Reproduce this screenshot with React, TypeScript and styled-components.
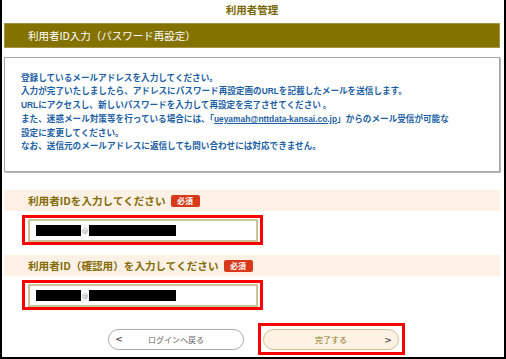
import React from "react";
import styled, { createGlobalStyle } from "styled-components";

const Global = createGlobalStyle`
  html, body { margin: 0; padding: 0; background: #fff; }
  body { font-family: "Noto Sans CJK JP", "Noto Sans", sans-serif; }
`;

const Frame = styled.div`
  box-sizing: border-box;
  width: 506px;
  height: 359px;
  border-left: 2px solid #000;
  border-right: 2px solid #000;
  border-bottom: 2px solid #000;
  padding: 0 4px 0 2px;
  display: flex;
  flex-direction: column;
  overflow: hidden;
`;

const Title = styled.div`
  height: 23px;
  line-height: 19px;
  text-align: center;
  font-size: 10.5px;
  font-weight: 700;
  color: #7a6800;
`;

const HeaderBar = styled.div`
  height: 25px;
  background: #847200;
  color: #fff;
  font-size: 10.5px;
  line-height: 25px;
  padding-left: 24px;
  box-shadow: inset 0 0 0 1px #a39544;
`;

const InfoBox = styled.div`
  box-sizing: border-box;
  margin-top: 9px;
  height: 115px;
  border: 1px solid #a5a5a5;
  box-shadow: 1px 1px 0 #b8b8b8;
  padding: 13px 0 0 16px;
  color: #1d5fa5;
  font-size: 8.6px;
  font-weight: 700;
  line-height: 13px;
  white-space: nowrap;
`;

const Latin = styled.span`
  font-family: "Liberation Sans", sans-serif;
  font-size: 8.4px;
`;

const Link = styled(Latin)`
  text-decoration: underline;
`;

const LabelBar = styled.div<{ $top: number }>`
  margin-top: ${(p) => p.$top}px;
  height: 21px;
  background: #fdf1e5;
  display: flex;
  align-items: center;
  padding-left: 24px;
  font-size: 10.6px;
  font-weight: 700;
  color: #836c08;
`;

const Badge = styled.span`
  margin-left: 5px;
  width: 29px;
  height: 12px;
  border-radius: 2px;
  background: #d7391a;
  color: #fff;
  font-size: 8px;
  font-weight: 700;
  line-height: 12px;
  text-align: center;
`;

const RedFrame = styled.div`
  margin: 4px 0 0 18px;
  box-sizing: border-box;
  width: 241px;
  height: 30px;
  border: 3px solid #ff0000;
  padding: 1px 2px 0 3px;
`;

const Field = styled.div`
  box-sizing: border-box;
  width: 230px;
  height: 23px;
  border: 2px solid #cbc297;
  background: #fff;
  display: flex;
  align-items: center;
  padding-left: 6px;
`;

const Redact = styled.span<{ $w: number }>`
  display: inline-block;
  width: ${(p) => p.$w}px;
  height: 11px;
  background: #000;
`;

const At = styled.span`
  font-family: "DejaVu Sans", sans-serif;
  font-size: 6.5px;
  color: #888;
  width: 8px;
  text-align: center;
`;

const ButtonRow = styled.div`
  margin-top: 13px;
  display: flex;
  align-items: center;
  padding-left: 104px;
  gap: 14px;
`;

const Pill = styled.div<{ $primary?: boolean }>`
  box-sizing: border-box;
  width: 136px;
  height: 21px;
  border-radius: 11px;
  border: 1.5px solid ${(p) => (p.$primary ? "#cdc092" : "#a9a9a9")};
  background: ${(p) => (p.$primary ? "#fdf1e4" : "#fff")};
  display: flex;
  align-items: center;
  padding: 0 6px;
  font-size: 8px;
  color: ${(p) => (p.$primary ? "#8a7420" : "#666")};
`;

const PillText = styled.span`
  flex: 1;
  text-align: center;
`;

const Chevron = styled.span`
  font-family: "DejaVu Sans", sans-serif;
  font-size: 9px;
  font-weight: 700;
  color: #555;
  width: 8px;
  text-align: center;
`;

const RedButtonFrame = styled.div`
  box-sizing: border-box;
  border: 3px solid #ff0000;
  padding: 3px 3px 2px 2px;
`;

function IdField() {
  return (
    <RedFrame>
      <Field>
        <Redact $w={45} />
        <At>@</At>
        <Redact $w={87} />
      </Field>
    </RedFrame>
  );
}

export default function App() {
  return (
    <>
      <Global />
      <Frame>
        <Title>利用者管理</Title>
        <HeaderBar>利用者ID入力（パスワード再設定）</HeaderBar>
        <InfoBox>
          登録しているメールアドレスを入力してください。
          <br />
          入力が完了いたしましたら、アドレスにパスワード再設定画の<Latin>URL</Latin>を記載したメールを送信します。
          <br />
          <Latin>URL</Latin>にアクセスし、新しいパスワードを入力して再設定を完了させてください 。
          <br />
          また、迷惑メール対策等を行っている場合には、「<Link>ueyamah@nttdata-kansai.co.jp</Link>」からのメール受信が可能な
          <br />
          設定に変更してください。
          <br />
          なお、送信元のメールアドレスに返信しても問い合わせには対応できません。
        </InfoBox>
        <LabelBar $top={18}>
          利用者IDを入力してください<Badge>必須</Badge>
        </LabelBar>
        <IdField />
        <LabelBar $top={10}>
          利用者ID（確認用）を入力してください<Badge>必須</Badge>
        </LabelBar>
        <IdField />
        <ButtonRow>
          <Pill>
            <Chevron>&lt;</Chevron>
            <PillText>ログインへ戻る</PillText>
            <Chevron />
          </Pill>
          <RedButtonFrame>
            <Pill $primary>
              <Chevron />
              <PillText>完了する</PillText>
              <Chevron>&gt;</Chevron>
            </Pill>
          </RedButtonFrame>
        </ButtonRow>
      </Frame>
    </>
  );
}
